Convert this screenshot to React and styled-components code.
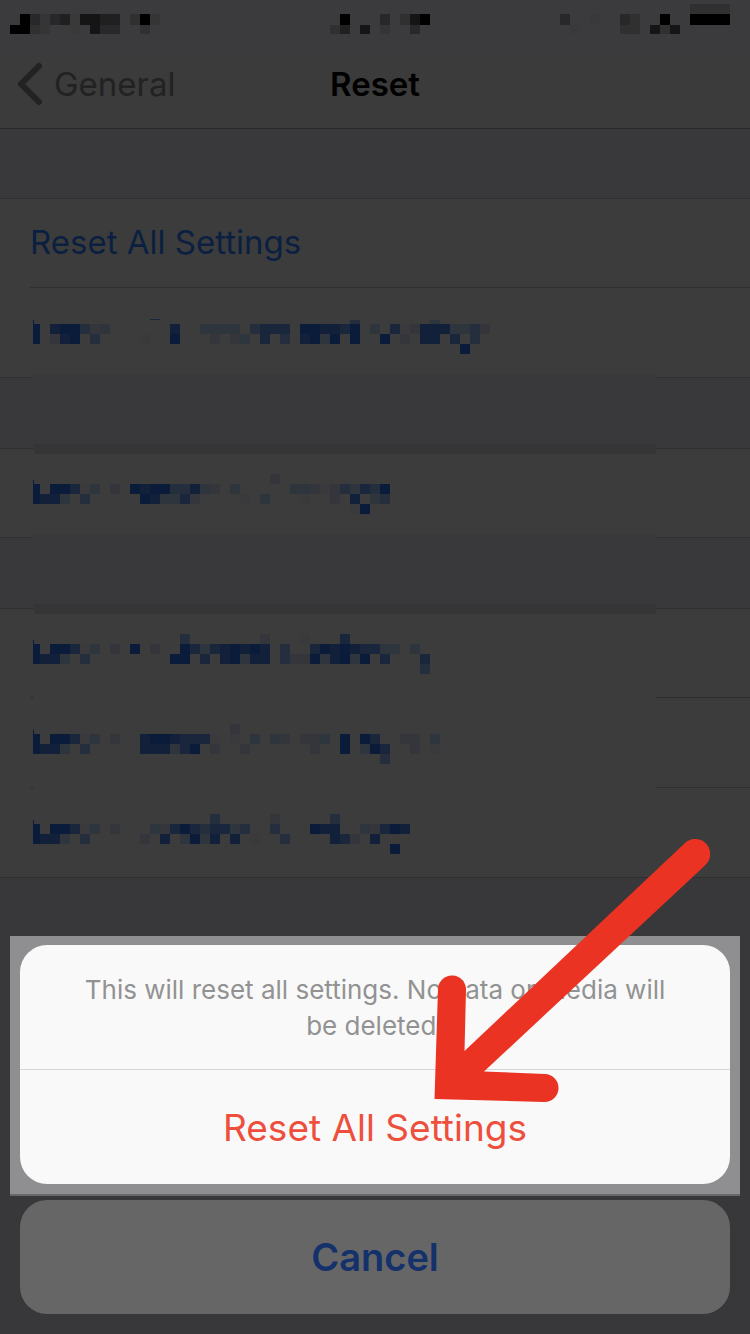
import React from "react";
import styled, { createGlobalStyle } from "styled-components";

// cell colours, from faint to solid
const BLUES = ["#3a3a3c", "#35363c", "#2f353c", "#252e3c", "#1a263b", "#12203a", "#0b1c3a"];
const GRAYS = ["#393939", "#353535", "#303030", "#28282a", "#202020", "#151515", "#000000"];

// every run is [x, y, cells, height]
const STATUS_LEFT = [
  [20, 14, "6313405544", 11],
  [10, 25, "6621..0.533", 9],
  [130, 14, "261", 11],
  [140, 25, "2", 9],
];

const STATUS_CENTER = [
  [340, 14, "6...3.256", 11],
  [330, 25, "24.5.1..3", 9],
];

const STATUS_RIGHT = [
  [560, 14, "3..0..32..6", 11],
  [570, 25, "0....22.525", 9],
  [690, 4, "2222", 10],
  [690, 14, "6666", 11],
];

const LOCATION_ROW = [
  [24, 32, "6", 4],
  [150, 31, "4", 1],
  [350, 32, "3", 4],
  [430, 32, "2", 4],
  [30, 36, "6.566312......5..2222.3444.665546.2.4015552231"],
  [30, 46, "6.156.3....0..6...1.12.4.3.5626.6..6.1.55.4.3"],
  [460, 56, "6"],
];

const CONTENT_ROW = [
  [24, 31, "6", 4],
  [270, 25, "1"],
  [30, 35, "6.66402.1.656633521.2.....2210132436"],
  [30, 45, "6552.3.....652241....0.2...0..1.5.23"],
  [350, 55, "06"],
];

const NETWORK_ROW = [
  [24, 31, "6", 4],
  [180, 25, "3.......1...0...4"],
  [30, 35, "6.66402.1.6.1..642456565.3..465654422.2"],
  [30, 45, "6552.3........66.4.56255.311625626.4...4"],
  [420, 55, "3"],
];

const DICTIONARY_ROW = [
  [24, 32, "6", 4],
  [230, 26, "1"],
  [30, 36, "6.66402.1..56654440.0.2.21.112.6.64..11.2"],
  [30, 46, "6552.3.....555246.1..1......1..6.264..1.0"],
  [380, 56, "3"],
];

const LAYOUT_ROW = [
  [24, 32, "6", 4],
  [210, 26, "3.....1.....3"],
  [30, 36, "6.66402.1...2146434423..3...655..21465"],
  [30, 46, "6552.3.....1.5.2625.5.0..3....541.5"],
  [390, 56, "6"],
];

const Mosaic = ({ runs, colors, x, width, height }) => (
  <MosaicSvg
    width={width}
    height={height}
    viewBox={`${x} 0 ${width} ${height}`}
    shapeRendering="crispEdges"
    aria-hidden="true"
  >
    {runs.map(([left, top, cells, size = 10]) =>
      cells.split("").map((cell, i) =>
        cell === "." ? null : (
          <rect
            key={`${left}-${top}-${i}`}
            x={left + i * 10}
            y={top}
            width={10}
            height={size}
            fill={colors[Number(cell)]}
          />
        )
      )
    )}
  </MosaicSvg>
);

const HiddenRow = ({ runs, line }) => (
  <Row $line={line}>
    <Mosaic runs={runs} colors={BLUES} x={33} width={460} height={80} />
  </Row>
);

const App = () => {
  return (
    <Page>
      <GlobalStyle />
      <StatusBar>
        <Mosaic runs={STATUS_LEFT} colors={GRAYS} x={10} width={150} height={34} />
        <Mosaic runs={STATUS_CENTER} colors={GRAYS} x={320} width={110} height={34} />
        <Mosaic runs={STATUS_RIGHT} colors={GRAYS} x={560} width={180} height={34} />
      </StatusBar>

      <NavBar>
        <BackButton type="button">
          <svg width="26" height="44" viewBox="0 0 26 44" fill="none" aria-hidden="true">
            <path
              d="M22 4 L4 22 L22 40"
              stroke="currentColor"
              strokeWidth="6"
              strokeLinecap="round"
              strokeLinejoin="round"
            />
          </svg>
          General
        </BackButton>
        <Title>Reset</Title>
      </NavBar>

      <main>
        <Gap />
        <List>
          <Row $line="inset">
            <RowButton type="button">Reset All Settings</RowButton>
          </Row>
          <HiddenRow runs={LOCATION_ROW} line="full" />
        </List>
        <Gap $smear />
        <List>
          <HiddenRow runs={CONTENT_ROW} line="full" />
        </List>
        <Gap $smear />
        <List>
          <HiddenRow runs={NETWORK_ROW} line="broken" />
          <HiddenRow runs={DICTIONARY_ROW} line="broken" />
          <HiddenRow runs={LAYOUT_ROW} line="full" />
        </List>
      </main>

      <Sheet role="dialog" aria-label="Reset All Settings">
        <Highlight>
          <Card>
            <Message>This will reset all settings. No data or media will be deleted.</Message>
            <ResetButton type="button">Reset All Settings</ResetButton>
          </Card>
        </Highlight>
        <CancelButton type="button">Cancel</CancelButton>
        <Arrow width="276" height="264" viewBox="434 839 276 264" aria-hidden="true">
          <path
            d="M434.5 1099 L438 989 A14 14 0 0 1 466 990 L464.5 1051 L685 843 A15 15 0 0 1 705.5 865 L484 1071.5 L545 1074 A14 14 0 0 1 544 1102 Z"
            fill="#eb3323"
          />
        </Arrow>
      </Sheet>
    </Page>
  );
};

export default App;

const GlobalStyle = createGlobalStyle`
  * {
    box-sizing: border-box;
  }

  body {
    margin: 0;
    background: #38383a;
    font-family: Inter, "Liberation Sans", sans-serif;
  }

  button {
    border: none;
    padding: 0;
    background: none;
    font-family: inherit;
    cursor: pointer;
  }
`;

const Page = styled.div`
  position: relative;
  min-height: 100vh;
  background: #38383a;
`;

const MosaicSvg = styled.svg`
  display: block;
`;

const StatusBar = styled.div`
  display: grid;
  grid-template-columns: 1fr auto 1fr;
  height: 59px;
  padding: 0 10px;
  background: #3b3b3d;

  & > :last-child {
    justify-self: end;
  }
`;

const NavBar = styled.header`
  display: grid;
  grid-template-columns: 1fr auto 1fr;
  align-items: center;
  height: 70px;
  padding: 0 17px 20px;
  background: #3b3b3b;
  border-bottom: 1px solid #29292b;
`;

const BackButton = styled.button`
  display: flex;
  align-items: center;
  justify-self: start;
  gap: 11px;
  color: #222222;
  font-size: 33px;
  line-height: 44px;
`;

const Title = styled.h1`
  margin: 0;
  color: #000000;
  font-size: 33px;
  font-weight: 600;
  line-height: 44px;
`;

const Gap = styled.div`
  position: relative;
  height: ${(props) => (props.$smear ? "70px" : "69px")};
  background: #39393b;

  &::before {
    content: "";
    display: ${(props) => (props.$smear ? "block" : "none")};
    position: absolute;
    z-index: 1;
    top: -4px;
    left: 34px;
    right: 94px;
    height: 80px;
    background: linear-gradient(#39393b 70px, #353535 70px);
  }
`;

const List = styled.ul`
  margin: 0;
  padding: 0;
  list-style: none;
  background: #3c3c3c;
  border-top: 1px solid #2f2f30;
`;

const LINES = {
  full: "#2f2f30",
  inset: "linear-gradient(90deg, transparent 30px, #2f2f30 30px)",
  broken:
    "linear-gradient(90deg, transparent 30px, #2f2f30 30px 34px, transparent 34px calc(100% - 94px), #2f2f30 calc(100% - 94px))",
};

const Row = styled.li`
  display: flex;
  flex-direction: column;
  height: 90px;
  padding-left: 33px;

  &:first-child {
    height: 89px;
  }

  &::after {
    content: "";
    height: 1px;
    margin-top: auto;
    margin-left: -33px;
    background: ${(props) => LINES[props.$line]};
  }
`;

const RowButton = styled.button`
  flex: 1;
  margin-left: -3px;
  padding-bottom: 2px;
  color: #0b1f41;
  font-size: 33px;
  text-align: left;
`;

const Sheet = styled.section`
  position: absolute;
  left: 0;
  right: 0;
  bottom: 0;
  padding: 0 10px 20px;
`;

const Highlight = styled.div`
  padding: 9px 10px 10px;
  background: #8f8f91;
  border-bottom: 2px solid #68686a;
`;

const Card = styled.div`
  overflow: hidden;
  border-radius: 27px;
  background: #f9f9f9;
`;

const Message = styled.p`
  margin: 0;
  padding: 27px 60px 25px;
  border-bottom: 1px solid #d6d6d6;
  color: #929292;
  font-size: 26px;
  line-height: 36px;
  text-align: center;
`;

const ResetButton = styled.button`
  display: block;
  width: 100%;
  height: 114px;
  color: #ee4f3d;
  font-size: 37px;
`;

const CancelButton = styled.button`
  display: block;
  width: calc(100% - 20px);
  height: 114px;
  margin: 4px 10px 0;
  border-radius: 27px;
  background: #666666;
  color: #14316b;
  font-size: 38px;
  font-weight: 600;
`;

const Arrow = styled.svg`
  position: absolute;
  right: 40px;
  bottom: 231px;
  pointer-events: none;
`;
